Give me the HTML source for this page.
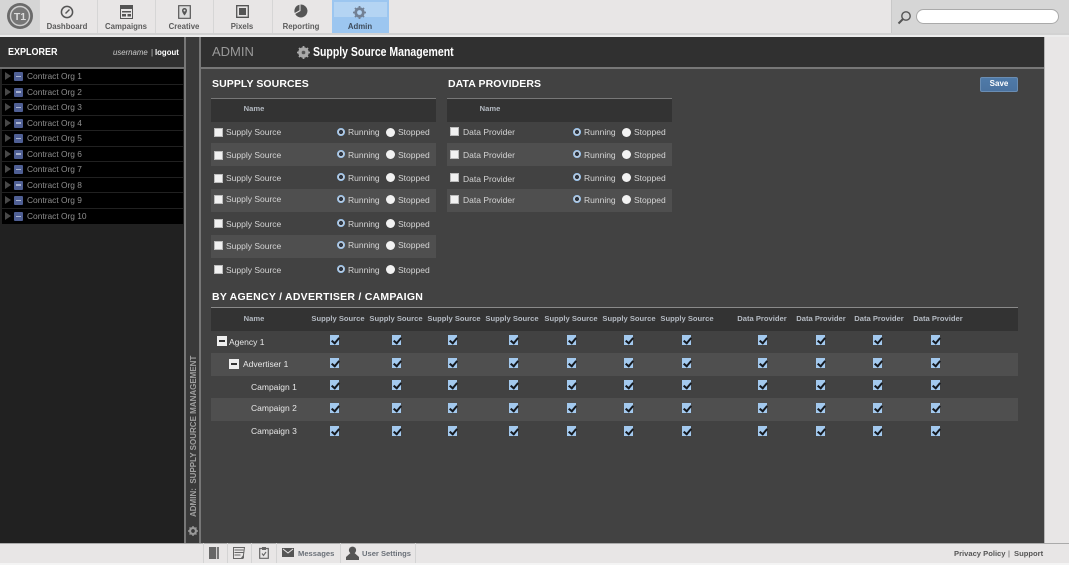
<!DOCTYPE html>
<html lang="en"><head><meta charset="utf-8"><title>Supply Source Management</title>
<style>
html,body{margin:0;padding:0;width:1069px;height:565px;overflow:hidden;background:#e8e6e6}
body{position:relative;font-family:"Liberation Sans",Arial,sans-serif}
div,i,span,svg{position:absolute;display:block}
#p{left:0;top:0;width:1069px;height:565px;overflow:hidden;filter:blur(.35px)}
.b{background:#333}
.t{white-space:nowrap;font-size:8.5px;line-height:12px;height:12px;color:#d4d4d4}
.m{text-align:center;width:90px}
.h{font-weight:bold;font-size:7.6px;color:#b4bac2}
.nav{font-weight:bold;font-size:7.8px;color:#5c5c5c;text-align:center;width:56px;top:20.5px}
.sep{top:0;width:1px;height:33px;background:#d6d6d6}
.sec{font-weight:bold;font-size:10.5px;color:#fff;letter-spacing:.08px}
.org{left:27px;color:#8f8f8f;font-size:8.4px}
.or{left:2px;width:181px;height:14.5px;background:#000}
.ar{left:5px;width:0;height:0;border-left:6px solid #484848;border-top:4px solid transparent;border-bottom:4px solid transparent}
.ic{left:14px;width:9px;height:9px;background:#4f5f94;border-radius:1px}
.ic:after{content:"";position:absolute;left:2px;top:3.5px;width:5px;height:1.5px;background:#a8b2d0}
.c{width:9px;height:9px;background:#f1f1f1;box-sizing:border-box;border:.5px solid #bbb}
.r{width:6px;height:6px;border-radius:50%;background:#2c3440;border:1.5px solid #9cc6f0;box-shadow:inset 0 0 0 .8px #e8f0f8}
.s{width:9px;height:9px;border-radius:50%;background:#f2f2f2}
.k{top:0;width:9px;height:10px;background:#a3c9ee}
.k:after{content:"";position:absolute;left:2.6px;top:.6px;width:3px;height:6px;border:solid #14181e;border-width:0 2px 2px 0;transform:rotate(40deg)}
.row{left:0;width:1069px;height:0}
.st{background:#4f4f4f;height:23px}
.a1{left:330px}.a2{left:392px}.a3{left:448px}.a4{left:509px}.a5{left:567px}.a6{left:624px}.a7{left:682px}.a8{left:758px}.a9{left:816px}.a10{left:873px}.a11{left:931px}
.mn{width:10px;height:10px;background:#eee}
.mn:after{content:"";position:absolute;left:2px;top:4px;width:6px;height:2px;background:#333}
.bt{font-weight:bold;font-size:7.6px;color:#666;top:547.5px}
.cell{top:543px;width:1px;height:20px;background:#d4d4d4}
</style></head><body>
<div id="p">

<!-- top bar -->
<div style="left:0;top:0;width:1069px;height:33px;background:#e8e6e6"></div>
<div style="left:0;top:33px;width:1069px;height:2px;background:#d2d2d2"></div>
<div style="left:0;top:35px;width:1069px;height:2px;background:#ececec"></div>
<div style="left:0;top:0;width:39px;height:33px;background:#d5d5d5"></div>
<svg style="left:6px;top:2px" width="28" height="28" viewBox="0 0 28 28"><circle cx="14" cy="14" r="13" fill="#6a6a6a"/><circle cx="14" cy="14" r="9.5" fill="#777" stroke="#cfcfcf" stroke-width="1.4"/><text x="14" y="18" font-family="Liberation Sans" font-weight="bold" font-size="10.5" text-anchor="middle" fill="#ddd">T1</text></svg>
<div class="sep" style="left:39px"></div><div class="sep" style="left:97px"></div><div class="sep" style="left:155px"></div><div class="sep" style="left:213px"></div><div class="sep" style="left:272px"></div>
<div style="left:332px;top:0;width:57px;height:33px;background:#9cc6f0"></div>
<div style="left:334px;top:2px;width:53px;height:15px;background:#b4d4f3"></div>
<svg style="left:60px;top:5px" width="14" height="14" viewBox="0 0 14 14"><circle cx="7" cy="7" r="5.6" fill="none" stroke="#555" stroke-width="1.5"/><path d="M5.5 8.5L9.5 4.5" stroke="#555" stroke-width="1.4"/></svg>
<svg style="left:120px;top:5px" width="13" height="14" viewBox="0 0 13 14"><path d="M.5.5h12v13H.5z" fill="none" stroke="#555"/><path d="M1 1h11v3H1zM2 6h9v1.500H2zM2 9h4v2.500H2zM7.500 9h3.500v2.500H7.500z" fill="#555"/></svg>
<svg style="left:178px;top:5px" width="13" height="14" viewBox="0 0 13 14"><path d="M.7.7h11.600v12.600H.7z" fill="#ddd" stroke="#555" stroke-width="1.2"/><path d="M6.500 3A2.500 2.500 0 0 1 9 5.500C9 7.500 6.500 10.500 6.500 10.500S4 7.500 4 5.500A2.500 2.500 0 0 1 6.500 3z" fill="#555"/><circle cx="6.500" cy="5.500" r="1" fill="#ddd"/></svg>
<svg style="left:236px;top:5px" width="13" height="13" viewBox="0 0 13 13"><path d="M.7.700h11.600v11.600H.7z" fill="none" stroke="#555" stroke-width="1.300"/><path d="M3 3h7v7H3z" fill="#555"/></svg>
<svg style="left:294px;top:4px" width="14" height="14" viewBox="0 0 14 14"><path d="M7 0.500A6.500 6.500 0 1 1 1.200 10L6.500 7V.500z" fill="#555"/><path d="M5.500.700V6.300L.7 9A6.500 6.500 0 0 1 5.500.700z" fill="#555"/></svg>
<svg style="left:353px;top:6px" width="13" height="13" viewBox="0 0 13 13"><circle cx="6.500" cy="6.500" r="3.900" fill="none" stroke="#728094" stroke-width="2.600"/><path d="M6.500 0v13M0 6.500h13M2 2l9 9M11 2l-9 9" stroke="#728094" stroke-width="1.800"/><circle cx="6.500" cy="6.500" r="2.400" fill="#b4d4f3"/></svg>
<div class="t nav" style="left:39px">Dashboard</div>
<div class="t nav" style="left:98px">Campaigns</div>
<div class="t nav" style="left:156px">Creative</div>
<div class="t nav" style="left:214px">Pixels</div>
<div class="t nav" style="left:273px">Reporting</div>
<div class="t nav" style="left:332px;color:#3e4c5c">Admin</div>
<!-- search -->
<div style="left:891px;top:0;width:178px;height:33px;background:#d6d6d6;border-left:1px solid #c8c8c8"></div>
<svg style="left:897px;top:10px" width="15" height="15" viewBox="0 0 15 15"><circle cx="9" cy="6" r="4.200" fill="none" stroke="#555" stroke-width="1.400"/><path d="M6 9L1.500 13.500" stroke="#555" stroke-width="2"/></svg>
<div style="left:916px;top:9px;width:141px;height:13px;background:#fff;border:1px solid #aaa;border-radius:8px"></div>

<!-- explorer -->
<div style="left:0;top:37px;width:185px;height:506px;background:#212121"></div>
<div style="left:0;top:37px;width:185px;height:30px;background:#303030"></div>
<div style="left:0;top:67px;width:185px;height:2px;background:#6e6e6e"></div>
<div class="t" style="left:8px;top:46px;font-weight:bold;font-size:10px;color:#fff;transform:scaleX(.9);transform-origin:left;line-height:13px;height:13px">EXPLORER</div>
<div class="t" style="left:113px;top:47px;font-style:italic;font-size:7.800px;color:#ccc">username</div>
<div class="t" style="left:151px;top:47px;font-size:8px;color:#ccc">|</div>
<div class="t" style="left:155px;top:47px;font-weight:bold;font-size:7.800px;color:#fff">logout</div>
<div class="or" style="top:69px"></div><div class="or" style="top:84.500px"></div><div class="or" style="top:100px"></div><div class="or" style="top:115.500px"></div><div class="or" style="top:131px"></div><div class="or" style="top:146.500px"></div><div class="or" style="top:162px"></div><div class="or" style="top:177.500px"></div><div class="or" style="top:193px"></div><div class="or" style="top:208.500px;height:15.500px"></div>
<i class="ar" style="top:72px"></i><i class="ic" style="top:72px"></i><div class="t org" style="top:70px">Contract Org 1</div>
<i class="ar" style="top:87.500px"></i><i class="ic" style="top:87.500px"></i><div class="t org" style="top:85.500px">Contract Org 2</div>
<i class="ar" style="top:103px"></i><i class="ic" style="top:103px"></i><div class="t org" style="top:101px">Contract Org 3</div>
<i class="ar" style="top:118.500px"></i><i class="ic" style="top:118.500px"></i><div class="t org" style="top:117px">Contract Org 4</div>
<i class="ar" style="top:134px"></i><i class="ic" style="top:134px"></i><div class="t org" style="top:132px">Contract Org 5</div>
<i class="ar" style="top:149.500px"></i><i class="ic" style="top:149.500px"></i><div class="t org" style="top:148px">Contract Org 6</div>
<i class="ar" style="top:165px"></i><i class="ic" style="top:165px"></i><div class="t org" style="top:163px">Contract Org 7</div>
<i class="ar" style="top:180.500px"></i><i class="ic" style="top:180.500px"></i><div class="t org" style="top:179px">Contract Org 8</div>
<i class="ar" style="top:196px"></i><i class="ic" style="top:196px"></i><div class="t org" style="top:194px">Contract Org 9</div>
<i class="ar" style="top:212px"></i><i class="ic" style="top:212px"></i><div class="t org" style="top:210px">Contract Org 10</div>

<!-- divider -->
<div style="left:184px;top:37px;width:2px;height:506px;background:#777"></div>
<div style="left:186px;top:37px;width:13px;height:506px;background:#3a3a3a"></div>
<div style="left:199px;top:37px;width:2px;height:506px;background:#777"></div>
<div class="t" style="left:194px;top:517px;width:162px;font-weight:bold;font-size:8px;color:#a0a0a0;transform-origin:0 0;transform:rotate(-90deg) translate(0,-6px)">ADMIN:&nbsp; SUPPLY SOURCE MANAGEMENT</div>
<svg style="left:188px;top:526px" width="10" height="10" viewBox="0 0 13 13"><circle cx="6.500" cy="6.500" r="3.900" fill="none" stroke="#9a9a9a" stroke-width="2.600"/><path d="M6.500 0v13M0 6.500h13M2 2l9 9M11 2l-9 9" stroke="#9a9a9a" stroke-width="1.800"/><circle cx="6.500" cy="6.500" r="2.400" fill="#3a3a3a"/></svg>

<!-- main -->
<div style="left:201px;top:37px;width:843px;height:30px;background:#303030"></div>
<div style="left:201px;top:67px;width:843px;height:2px;background:#777"></div>
<div style="left:201px;top:69px;width:843px;height:474px;background:#424242"></div>
<div style="left:1044px;top:37px;width:1px;height:506px;background:#b5b5b5"></div>
<div class="t" style="left:212px;top:46px;font-size:13px;color:#999">ADMIN</div>
<svg style="left:297px;top:46px" width="13" height="13" viewBox="0 0 13 13"><circle cx="6.500" cy="6.500" r="3.900" fill="none" stroke="#aaa" stroke-width="2.800"/><path d="M6.500 0v13M0 6.500h13M2 2l9 9M11 2l-9 9" stroke="#aaa" stroke-width="1.800"/><circle cx="6.500" cy="6.500" r="1.800" fill="#555"/></svg>
<div class="t" style="left:313px;top:46px;font-weight:bold;font-size:12.500px;color:#fff;transform:scaleX(.84);transform-origin:left">Supply Source Management</div>

<div class="t sec" style="left:212px;top:78px">SUPPLY SOURCES</div>
<div class="t sec" style="left:448px;top:78px">DATA PROVIDERS</div>
<div style="left:980px;top:77px;width:38px;height:15px;box-sizing:border-box;background:linear-gradient(#4f7aa8,#4a729f);border:.5px solid #6a8db3;border-radius:2px"></div>
<div class="t m" style="left:954px;top:77.500px;font-weight:bold;font-size:8px;color:#fff">Save</div>

<!-- supply table -->
<div class="b" style="left:211px;top:98px;width:225px;height:23px;border-top:1px solid #777"></div>
<div class="b" style="left:447px;top:98px;width:225px;height:23px;border-top:1px solid #777"></div>
<div class="t h m" style="left:209px;top:103px">Name</div>
<div class="t h m" style="left:445px;top:103px">Name</div>
<div class="st" style="left:211px;top:143px;width:225px"></div>
<div class="st" style="left:211px;top:189px;width:225px"></div>
<div class="st" style="left:211px;top:235px;width:225px"></div>
<div class="st" style="left:447px;top:143px;width:225px"></div>
<div class="st" style="left:447px;top:189px;width:225px"></div>

<i class="c" style="left:214px;top:127.500px"></i><div class="t" style="left:226px;top:126px">Supply Source</div><i class="r" style="left:336.500px;top:127.500px"></i><div class="t" style="left:348px;top:126px">Running</div><i class="s" style="left:386px;top:127.500px"></i><div class="t" style="left:398px;top:126px">Stopped</div>
<i class="c" style="left:214px;top:150.500px"></i><div class="t" style="left:226px;top:149px">Supply Source</div><i class="r" style="left:336.500px;top:150px"></i><div class="t" style="left:348px;top:149px">Running</div><i class="s" style="left:386px;top:150px"></i><div class="t" style="left:398px;top:149px">Stopped</div>
<i class="c" style="left:214px;top:173.500px"></i><div class="t" style="left:226px;top:172px">Supply Source</div><i class="r" style="left:336.500px;top:173px"></i><div class="t" style="left:348px;top:172px">Running</div><i class="s" style="left:386px;top:173px"></i><div class="t" style="left:398px;top:172px">Stopped</div>
<i class="c" style="left:214px;top:195px"></i><div class="t" style="left:226px;top:193px">Supply Source</div><i class="r" style="left:336.500px;top:195px"></i><div class="t" style="left:348px;top:194px">Running</div><i class="s" style="left:386px;top:195px"></i><div class="t" style="left:398px;top:194px">Stopped</div>
<i class="c" style="left:214px;top:219px"></i><div class="t" style="left:226px;top:218px">Supply Source</div><i class="r" style="left:336.500px;top:219px"></i><div class="t" style="left:348px;top:218px">Running</div><i class="s" style="left:386px;top:219px"></i><div class="t" style="left:398px;top:218px">Stopped</div>
<i class="c" style="left:214px;top:241px"></i><div class="t" style="left:226px;top:240px">Supply Source</div><i class="r" style="left:336.500px;top:241px"></i><div class="t" style="left:348px;top:239px">Running</div><i class="s" style="left:386px;top:241px"></i><div class="t" style="left:398px;top:239px">Stopped</div>
<i class="c" style="left:214px;top:265px"></i><div class="t" style="left:226px;top:264px">Supply Source</div><i class="r" style="left:336.500px;top:265px"></i><div class="t" style="left:348px;top:264px">Running</div><i class="s" style="left:386px;top:265px"></i><div class="t" style="left:398px;top:264px">Stopped</div>

<i class="c" style="left:450px;top:127px"></i><div class="t" style="left:463px;top:126px">Data Provider</div><i class="r" style="left:572.500px;top:127.500px"></i><div class="t" style="left:584px;top:126px">Running</div><i class="s" style="left:622px;top:127.500px"></i><div class="t" style="left:634px;top:126px">Stopped</div>
<i class="c" style="left:450px;top:149.500px"></i><div class="t" style="left:463px;top:149px">Data Provider</div><i class="r" style="left:572.500px;top:150px"></i><div class="t" style="left:584px;top:149px">Running</div><i class="s" style="left:622px;top:150px"></i><div class="t" style="left:634px;top:149px">Stopped</div>
<i class="c" style="left:450px;top:173px"></i><div class="t" style="left:463px;top:172.500px">Data Provider</div><i class="r" style="left:572.500px;top:173px"></i><div class="t" style="left:584px;top:172px">Running</div><i class="s" style="left:622px;top:173px"></i><div class="t" style="left:634px;top:172px">Stopped</div>
<i class="c" style="left:450px;top:194.500px"></i><div class="t" style="left:463px;top:194px">Data Provider</div><i class="r" style="left:572.500px;top:195px"></i><div class="t" style="left:584px;top:194px">Running</div><i class="s" style="left:622px;top:195px"></i><div class="t" style="left:634px;top:194px">Stopped</div>

<!-- agency table -->
<div class="t sec" style="left:212px;top:291px;letter-spacing:.25px">BY AGENCY / ADVERTISER / CAMPAIGN</div>
<div class="b" style="left:211px;top:307px;width:807px;height:23px;border-top:1px solid #8a8a8a"></div>
<div class="t h m" style="left:209px;top:313px">Name</div>
<div class="t h m" style="left:293px;top:313px">Supply Source</div>
<div class="t h m" style="left:351px;top:313px">Supply Source</div>
<div class="t h m" style="left:409px;top:313px">Supply Source</div>
<div class="t h m" style="left:467px;top:313px">Supply Source</div>
<div class="t h m" style="left:526px;top:313px">Supply Source</div>
<div class="t h m" style="left:584px;top:313px">Supply Source</div>
<div class="t h m" style="left:642px;top:313px">Supply Source</div>
<div class="t h m" style="left:717px;top:313px">Data Provider</div>
<div class="t h m" style="left:776px;top:313px">Data Provider</div>
<div class="t h m" style="left:834px;top:313px">Data Provider</div>
<div class="t h m" style="left:893px;top:313px">Data Provider</div>
<div class="st" style="left:211px;top:353px;width:807px"></div>
<div class="st" style="left:211px;top:398px;width:807px"></div>
<i class="mn" style="left:217px;top:336px"></i><div class="t" style="left:229px;top:335.500px;color:#e8e8e8">Agency 1</div>
<i class="mn" style="left:229px;top:359px"></i><div class="t" style="left:243px;top:358px;color:#e8e8e8">Advertiser 1</div>
<div class="t" style="left:251px;top:381px;color:#e8e8e8">Campaign 1</div>
<div class="t" style="left:251px;top:402px;color:#e8e8e8">Campaign 2</div>
<div class="t" style="left:251px;top:425px;color:#e8e8e8">Campaign 3</div>
<div class="row" style="top:335px"><i class="k a1"></i><i class="k a2"></i><i class="k a3"></i><i class="k a4"></i><i class="k a5"></i><i class="k a6"></i><i class="k a7"></i><i class="k a8"></i><i class="k a9"></i><i class="k a10"></i><i class="k a11"></i></div>
<div class="row" style="top:358px"><i class="k a1"></i><i class="k a2"></i><i class="k a3"></i><i class="k a4"></i><i class="k a5"></i><i class="k a6"></i><i class="k a7"></i><i class="k a8"></i><i class="k a9"></i><i class="k a10"></i><i class="k a11"></i></div>
<div class="row" style="top:380px"><i class="k a1"></i><i class="k a2"></i><i class="k a3"></i><i class="k a4"></i><i class="k a5"></i><i class="k a6"></i><i class="k a7"></i><i class="k a8"></i><i class="k a9"></i><i class="k a10"></i><i class="k a11"></i></div>
<div class="row" style="top:403px"><i class="k a1"></i><i class="k a2"></i><i class="k a3"></i><i class="k a4"></i><i class="k a5"></i><i class="k a6"></i><i class="k a7"></i><i class="k a8"></i><i class="k a9"></i><i class="k a10"></i><i class="k a11"></i></div>
<div class="row" style="top:426px"><i class="k a1"></i><i class="k a2"></i><i class="k a3"></i><i class="k a4"></i><i class="k a5"></i><i class="k a6"></i><i class="k a7"></i><i class="k a8"></i><i class="k a9"></i><i class="k a10"></i><i class="k a11"></i></div>

<!-- bottom bar -->
<div style="left:0;top:543px;width:1069px;height:1px;background:#aaa"></div>
<div style="left:0;top:563px;width:1069px;height:2px;background:#f4f4f4"></div>
<div class="cell" style="left:203px"></div><div class="cell" style="left:227px"></div><div class="cell" style="left:251px"></div><div class="cell" style="left:276px"></div><div class="cell" style="left:340px"></div><div class="cell" style="left:415px"></div>
<svg style="left:209px;top:547px" width="11" height="12" viewBox="0 0 11 12"><path d="M0 0h7v12H0z" fill="#666"/><path d="M7.800 0H10v12H7.800z" fill="#777"/></svg>
<svg style="left:233px;top:547px" width="12" height="12" viewBox="0 0 12 12"><path d="M.5.500h11L10 11.500H.5z" fill="none" stroke="#666"/><path d="M1.500 3h9M1.500 5.500h9M1.500 8h6" stroke="#666"/><path d="M8 11l3-4v4z" fill="#666"/></svg>
<svg style="left:259px;top:546px" width="10" height="13" viewBox="0 0 10 13"><path d="M.7 2.500h8.600v9.800H.7z" fill="none" stroke="#666" stroke-width="1.200"/><path d="M3 1h4v3H3z" fill="#666"/><path d="M3 7.500l1.500 2L7 6" fill="none" stroke="#666" stroke-width="1.100"/></svg>
<svg style="left:282px;top:548px" width="12" height="9" viewBox="0 0 12 9"><path d="M0 0h12v9H0z" fill="#555"/><path d="M1 1l5 4 5-4" fill="none" stroke="#e8e6e6"/></svg>
<svg style="left:346px;top:546px" width="13" height="14" viewBox="0 0 13 14"><circle cx="6.500" cy="4.200" r="3.600" fill="#555"/><path d="M4.500 7h4l4.500 4v3H0v-3z" fill="#555"/></svg>
<div class="t bt" style="left:298px;color:#6a7078">Messages</div>
<div class="t bt" style="left:362px;color:#6a7078">User Settings</div>
<div class="t bt" style="left:954px;color:#555">Privacy Policy</div>
<div class="t bt" style="left:1008px;color:#555;font-weight:normal">|</div>
<div class="t bt" style="left:1014px;color:#555">Support</div>
</div>
</body></html>
